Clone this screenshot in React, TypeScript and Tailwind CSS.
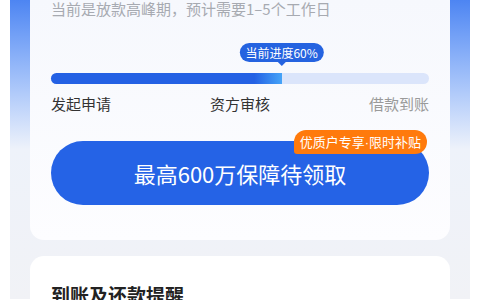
import React from 'react';

const progress = 61;

const App: React.FC = () => {
  return (
    <div className="w-[480px] h-[300px] overflow-hidden bg-white px-[10px] font-['Noto_Sans_CJK_SC','Noto_Sans',sans-serif]">
      <div className="h-full bg-gradient-to-b from-[#4c84f2] via-[#eef2fa] via-50% to-[#f1f2f6] px-[20px]">
        <div className="rounded-b-[14px] bg-gradient-to-b from-[#f6f8fd] to-[#fdfdff] px-[21px] pb-[35px]">
          <p className="-mt-px text-[15px] leading-[20px] text-[#a7aab1]">当前是放款高峰期，预计需要1–5个工作日</p>

          <div className="relative mt-[24px] h-[22px]">
            <div
              className="absolute top-0 -translate-x-1/2 flex flex-col items-center"
              style={{ left: `${progress}%` }}
            >
              <div className="whitespace-nowrap rounded-full bg-[#2563e0] px-[6px] text-[12px] leading-[19px] text-white">当前进度60%</div>
              <div className="h-0 w-0 border-x-[4px] border-t-[4px] border-x-transparent border-t-[#2563e0]"></div>
            </div>
          </div>

          <div className="mt-[8px] h-[11px] rounded-full bg-[#dbe5fb]">
            <div
              className="h-full rounded-l-full bg-[linear-gradient(90deg,#2461e4_0%,#2461e4_88%,#46a4f8_100%)]"
              style={{ width: `${progress}%` }}
            ></div>
          </div>

          <div className="mt-[9px] flex justify-between text-[15px] leading-[22px]">
            <span className="text-[#333]">发起申请</span>
            <span className="text-[#333]">资方审核</span>
            <span className="text-[#9a9a9a]">借款到账</span>
          </div>

          <div className="relative mt-[26px]">
            <div className="flex h-[64px] items-center justify-center rounded-full bg-[#2563e6] text-[22px] text-white">
              最高600万保障待领取
            </div>
            <div className="absolute right-[2px] -top-[11px] rounded-[12px_12px_12px_3px] bg-[#ff7a0c] px-[6px] text-[13px] leading-[23px] text-white">
              优质户专享<span className="font-['Liberation_Sans',sans-serif]">·</span>限时补贴
            </div>
          </div>
        </div>

        <div className="mt-[16px] rounded-t-[14px] bg-white px-[21px] pt-[27px]">
          <h2 className="text-[19px] font-bold leading-[24px] text-[#222]">到账及还款提醒</h2>
        </div>
      </div>
    </div>
  );
};

export default App;
